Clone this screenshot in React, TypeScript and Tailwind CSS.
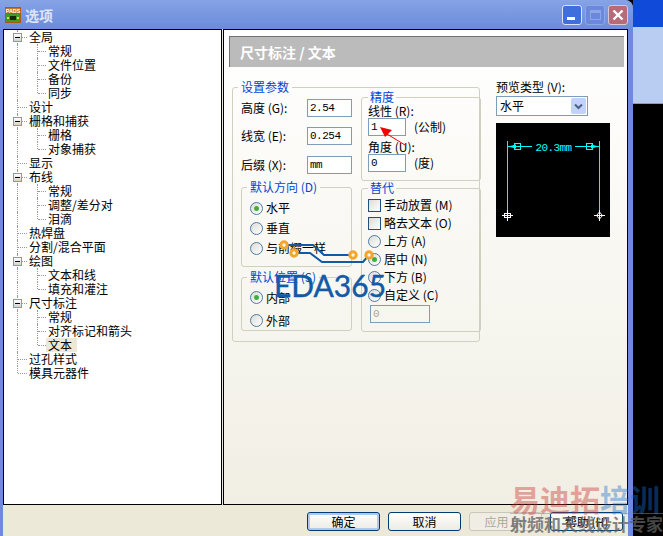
import React from 'react';

type TreeRow = { text: string; level: 0 | 1; toggle?: boolean; end?: boolean; selected?: boolean };

const treeRows: TreeRow[] = [
  { text: '全局', level: 0, toggle: true },
  { text: '常规', level: 1 },
  { text: '文件位置', level: 1 },
  { text: '备份', level: 1 },
  { text: '同步', level: 1, end: true },
  { text: '设计', level: 0 },
  { text: '栅格和捕获', level: 0, toggle: true },
  { text: '栅格', level: 1 },
  { text: '对象捕获', level: 1, end: true },
  { text: '显示', level: 0 },
  { text: '布线', level: 0, toggle: true },
  { text: '常规', level: 1 },
  { text: '调整/差分对', level: 1 },
  { text: '泪滴', level: 1, end: true },
  { text: '热焊盘', level: 0 },
  { text: '分割/混合平面', level: 0 },
  { text: '绘图', level: 0, toggle: true },
  { text: '文本和线', level: 1 },
  { text: '填充和灌注', level: 1, end: true },
  { text: '尺寸标注', level: 0, toggle: true },
  { text: '常规', level: 1 },
  { text: '对齐标记和箭头', level: 1 },
  { text: '文本', level: 1, end: true, selected: true },
  { text: '过孔样式', level: 0 },
  { text: '模具元器件', level: 0, end: true },
];

const TreeItem = ({ row }: { row: TreeRow }) => (
  <div className={`relative h-[14px] leading-[14px] whitespace-nowrap ${row.level === 0 ? 'pl-[25px]' : 'pl-[44px]'}`}>
    <span className={`absolute left-[13px] top-0 border-l border-dotted border-[#9a9a90] ${row.level === 0 && row.end ? 'h-[7px]' : 'h-[14px]'}`} />
    {row.level === 1 && (
      <>
        <span className={`absolute left-[33px] top-0 border-l border-dotted border-[#9a9a90] ${row.end ? 'h-[7px]' : 'h-[14px]'}`} />
        <span className="absolute left-[34px] top-[7px] w-[8px] border-t border-dotted border-[#9a9a90]" />
      </>
    )}
    {row.level === 0 && <span className="absolute left-[14px] top-[7px] w-[9px] border-t border-dotted border-[#9a9a90]" />}
    {row.toggle && (
      <span className="absolute left-[9px] top-[3px] flex h-[9px] w-[9px] items-center justify-center border border-[#7b9ebd] bg-gradient-to-b from-white to-[#d8d3c2]">
        <span className="h-px w-[5px] bg-black" />
      </span>
    )}
    <span className={`relative ${row.selected ? '-ml-[2px] inline-block h-[14px] w-[31px] bg-[#ece9d8] pl-[2px]' : ''}`}>{row.text}</span>
  </div>
);

const Radio = ({ label, checked }: { label: string; checked?: boolean }) => (
  <div className="flex h-full items-center gap-[3px] whitespace-nowrap">
    <span className="flex h-[13px] w-[13px] shrink-0 items-center justify-center rounded-full border border-[#4d7ba3] bg-gradient-to-br from-[#dcdcd6] to-white">
      {checked && <span className="h-[5px] w-[5px] rounded-full bg-[#3fb03f]" />}
    </span>
    {label}
  </div>
);

const Check = ({ label }: { label: string }) => (
  <div className="flex h-[18px] items-center gap-[3px] whitespace-nowrap">
    <span className="h-[13px] w-[13px] shrink-0 border border-[#1c5180] bg-gradient-to-br from-[#dcdcd6] to-white" />
    {label}
  </div>
);

const Field = ({ value, className }: { value: string; className: string }) => (
  <div className={`h-[18px] border border-[#7f9db9] bg-white pl-[2px] font-['Liberation_Mono',monospace] text-[11px] leading-[16px] tracking-[-0.5px] ${className}`}>
    {value}
  </div>
);

const Group = ({ title, className, legendClass, children }: { title: string; className: string; legendClass: string; children: React.ReactNode }) => (
  <fieldset className={`min-w-0 rounded-[3px] border border-[#d0d0bf] ${className}`}>
    <legend className={`h-[14px] leading-[14px] text-[#0046d5] ${legendClass}`}>{title}</legend>
    {children}
  </fieldset>
);

const SettingRow = ({ label, value }: { label: string; value: string }) => (
  <div className="flex h-[18px] items-center justify-between">
    <span>{label}</span>
    <Field value={value} className="w-[45px]" />
  </div>
);

const PadsIcon = () => (
  <svg width="16" height="16" viewBox="0 0 16 16" className="shrink-0">
    <rect width="16" height="16" fill="#a8591a" />
    <rect x="1" y="1" width="14" height="5" fill="#c8782a" />
    <text x="8" y="5.6" textAnchor="middle" fontSize="5.4" fontWeight="700" fill="#fff" fontFamily="Liberation Sans, sans-serif">PADS</text>
    <rect x="1" y="7" width="14" height="8" fill="#3f9a2b" />
    <rect x="5" y="9" width="6" height="4" fill="#1a2a10" />
    <rect x="2" y="10" width="2" height="2" fill="#d8e040" />
    <rect x="12" y="10" width="2" height="2" fill="#d8e040" />
  </svg>
);

const PreviewDrawing = () => (
  <svg width="114" height="114" viewBox="0 0 114 114" className="block">
    <g stroke="#00ffff" strokeWidth="1" fill="none" shapeRendering="crispEdges">
      <path d="M11.5 18V97M103.5 18V97" />
      <path d="M12 23.5H36M79 23.5H103" />
      <path d="M18.5 20.5H24.5V26.5H18.5Z" />
      <path d="M96.5 20.5H90.5V26.5H96.5Z" />
    </g>
    <path d="M12 23.5L20 21.5V25.5Z M103 23.5L95 21.5V25.5Z" fill="#00ffff" />
    <text x="57.5" y="27.5" textAnchor="middle" fontSize="11" fill="#00ffff" fontFamily="Liberation Mono, monospace" letterSpacing="-0.6">20.3mm</text>
    <g stroke="#fff" strokeWidth="1" fill="none" shapeRendering="crispEdges">
      <path d="M6 92.5H17M11.5 87V98" />
      <path d="M98 92.5H109M103.5 87V98" />
      <path d="M8.5 90.5H14.5V94.5H8.5Z" />
    </g>
    <path d="M103.5 89L106.5 92.5L103.5 96L100.5 92.5Z" fill="none" stroke="#fff" />
  </svg>
);

const DialogButton = ({ label, isDefault, disabled }: { label: string; isDefault?: boolean; disabled?: boolean }) => (
  <button
    className={`h-[19px] w-[73px] rounded-[3px] border text-center text-[12px] leading-[16px] ${
      disabled
        ? 'border-[#c9c7ba] bg-[#f0eee4] text-[#aca899]'
        : 'border-[#003c74] bg-gradient-to-b from-white to-[#ecebe4] text-black'
    } ${isDefault ? 'shadow-[inset_0_0_0_2px_#b0c8f0]' : ''}`}
  >
    {label}
  </button>
);

export default function App() {
  return (
    <div className="relative flex h-[536px] w-[663px] overflow-hidden bg-black font-['Noto_Sans_CJK_SC',sans-serif] text-[12px] text-black">
      <div className="flex w-[633px] shrink-0 flex-col rounded-tr-[8px] bg-[#6f88e0]">
        <div className="flex h-[29px] shrink-0 items-center rounded-tr-[8px] bg-gradient-to-b from-[#86a3e6] via-[#7797e0] to-[#6d8bdc] pl-[5px] pr-[5px]">
          <PadsIcon />
          <span className="ml-[4px] text-[14px] font-bold leading-none text-[#dde5f7]">选项</span>
          <div className="ml-auto flex gap-[3px]">
            <div className="flex h-[20px] w-[20px] items-end rounded-[3px] border border-[#d8e2f8] bg-[#3f6fdd] pb-[4px] pl-[4px]">
              <span className="h-[3px] w-[8px] bg-white" />
            </div>
            <div className="flex h-[20px] w-[20px] items-center justify-center rounded-[3px] border border-[#8ea6e6] bg-[#6b88dc]">
              <span className="h-[10px] w-[11px] border border-[#8ea6e6] border-t-[3px]" />
            </div>
            <div className="flex h-[20px] w-[20px] items-center justify-center rounded-[3px] border border-[#d8c8d8] bg-[#b86a78]">
              <svg width="12" height="12" viewBox="0 0 12 12">
                <path d="M1.5 1.5L10.5 10.5M10.5 1.5L1.5 10.5" stroke="#fff" strokeWidth="2.4" />
              </svg>
            </div>
          </div>
        </div>

        <div className="ml-[3px] mr-[5px] flex min-h-0 flex-1 flex-col bg-[#ece9d8]">
          <div className="flex h-[476px] shrink-0 gap-px">
            <div className="w-[219px] shrink-0 border border-black bg-white">
              {treeRows.map((row, i) => (
                <TreeItem key={i} row={row} />
              ))}
            </div>

            <div className="flex-1 border border-black bg-gradient-to-b from-white to-[#f1efe4] pl-[5px] pt-[6px]">
              <div className="flex h-[31px] w-[395px] items-center border-l border-t border-[#707070] bg-[#bbbbbb] pl-[10px] text-[14px] font-bold text-white">
                尺寸标注 / 文本
              </div>

              <div className="ml-[3px] mt-[13px] flex">
                <Group title="设置参数" className="h-[262px] w-[248px] pl-[8px]" legendClass="-ml-[3px] px-[3px]">
                  <div className="flex gap-[9px]">
                    <div className="w-[111px] shrink-0 pt-[5px]">
                      <SettingRow label="高度 (G):" value="2.54" />
                      <div className="mt-[10px]">
                        <SettingRow label="线宽 (E):" value="0.254" />
                      </div>
                      <div className="mt-[11px]">
                        <SettingRow label="后缀 (X):" value="mm" />
                      </div>
                      <Group title="默认方向 (D)" className="mt-[6px] h-[87px] pl-[8px]" legendClass="-ml-[3px] px-[3px]">
                        <div className="pt-[4px]">
                          <div className="h-[20px]"><Radio label="水平" checked /></div>
                          <div className="h-[20px]"><Radio label="垂直" /></div>
                          <div className="h-[20px]"><Radio label="与前缀一样" /></div>
                        </div>
                      </Group>
                      <Group title="默认位置 (S)" className="mt-[3px] h-[61px] pl-[8px]" legendClass="-ml-[3px] px-[3px]">
                        <div className="pt-[2px]">
                          <div className="h-[23px]"><Radio label="内部" checked /></div>
                          <div className="h-[23px]"><Radio label="外部" /></div>
                        </div>
                      </Group>
                    </div>

                    <div className="-mt-[4px] w-[120px] shrink-0">
                      <Group title="精度" className="h-[91px] pl-[6px]" legendClass="px-[2px]">
                        <div className="h-[14px] leading-[14px]">线性 (R):</div>
                        <div className="flex items-center">
                          <Field value="1" className="w-[38px]" />
                          <span className="ml-[8px]">(公制)</span>
                        </div>
                        <div className="mt-[4px] h-[14px] leading-[14px]">角度 (U):</div>
                        <div className="flex items-center">
                          <Field value="0" className="w-[38px]" />
                          <span className="ml-[8px]">(度)</span>
                        </div>
                      </Group>
                      <Group title="替代" className="h-[151px] pl-[6px]" legendClass="px-[2px]">
                        <div className="pt-[1px]">
                          <Check label="手动放置 (M)" />
                          <Check label="略去文本 (O)" />
                          <div className="h-[18px]"><Radio label="上方 (A)" /></div>
                          <div className="h-[18px]"><Radio label="居中 (N)" checked /></div>
                          <div className="h-[18px]"><Radio label="下方 (B)" /></div>
                          <div className="h-[18px]"><Radio label="自定义 (C)" /></div>
                          <div className="ml-[2px] mt-[1px] h-[18px] w-[60px] border border-[#7f9db9] pl-[2px] font-['Liberation_Mono',monospace] text-[11px] leading-[16px] text-[#aca899]">
                            0
                          </div>
                        </div>
                      </Group>
                    </div>
                  </div>
                </Group>

                <div className="ml-[16px]">
                  <div className="h-[14px] whitespace-nowrap leading-[14px]">预览类型 (V):</div>
                  <div className="mt-[2px] flex h-[20px] w-[92px] items-center justify-between border border-[#7f9db9] bg-white pl-[3px] pr-px">
                    <span>水平</span>
                    <span className="flex h-[16px] w-[15px] items-center justify-center rounded-[2px] bg-[#c1d3fb]">
                      <svg width="9" height="7" viewBox="0 0 9 7">
                        <path d="M1 1.5L4.5 5L8 1.5" fill="none" stroke="#4d6185" strokeWidth="2" />
                      </svg>
                    </span>
                  </div>
                  <div className="mt-[7px] h-[114px] w-[114px] bg-black">
                    <PreviewDrawing />
                  </div>
                </div>
              </div>
            </div>
          </div>

          <div className="flex justify-end gap-[8px] pr-[5px] pt-[7px]">
            <DialogButton label="确定" isDefault />
            <DialogButton label="取消" />
            <DialogButton label="应用 (A)" disabled />
            <DialogButton label="帮助 (H)" />
          </div>
        </div>
      </div>

      <div className="flex flex-1 flex-col">
        <div className="h-[27px] bg-[#0f4bd8]" />
        <div className="h-[76px] bg-[#b9cdf2]" />
        <div className="h-px bg-[#9a9a9a]" />
      </div>

      {/* red arrow annotation */}
      <svg width="663" height="536" className="pointer-events-none absolute left-0 top-0">
        <path d="M380 127L392 130L385 137Z" fill="#f00000" />
        <path d="M387 134L405 145" stroke="#f00000" strokeWidth="1" />
        <g fill="none" stroke="#1259a7" strokeWidth="2">
          <path d="M287 245H313L324 255H350" />
          <path d="M297 253H310L322 262H363L369 255" />
        </g>
        <g fill="#f7f5ee" stroke="#f5a62a" strokeWidth="3">
          <circle cx="284" cy="245" r="3.2" />
          <circle cx="294" cy="253" r="3.2" />
          <circle cx="353" cy="255" r="3.2" />
          <circle cx="369" cy="255" r="3.2" />
        </g>
      </svg>

      <div className="absolute left-[274px] top-[267px] font-['Lato',sans-serif] text-[30px] leading-[36px] text-[#1259a7] [-webkit-text-stroke:0.4px_#1259a7]">EDA365</div>

      {/* watermark */}
      <div className="absolute left-[510px] top-[478px] whitespace-nowrap text-[30px] font-bold leading-[40px]">
        <span className="text-[#cd2d2d] opacity-40">易迪拓</span>
        <span className="text-[#1a6ed2] opacity-40">培训</span>
      </div>
      <div className="absolute left-[510px] top-[513px] h-px w-[153px] bg-[#8a8a8a] opacity-50" />
      <div className="absolute left-[510px] top-[514px] whitespace-nowrap text-[17px] font-bold leading-[20px] text-[#5f5f5f] opacity-75">
        射频和天线设计专家
      </div>
    </div>
  );
}
